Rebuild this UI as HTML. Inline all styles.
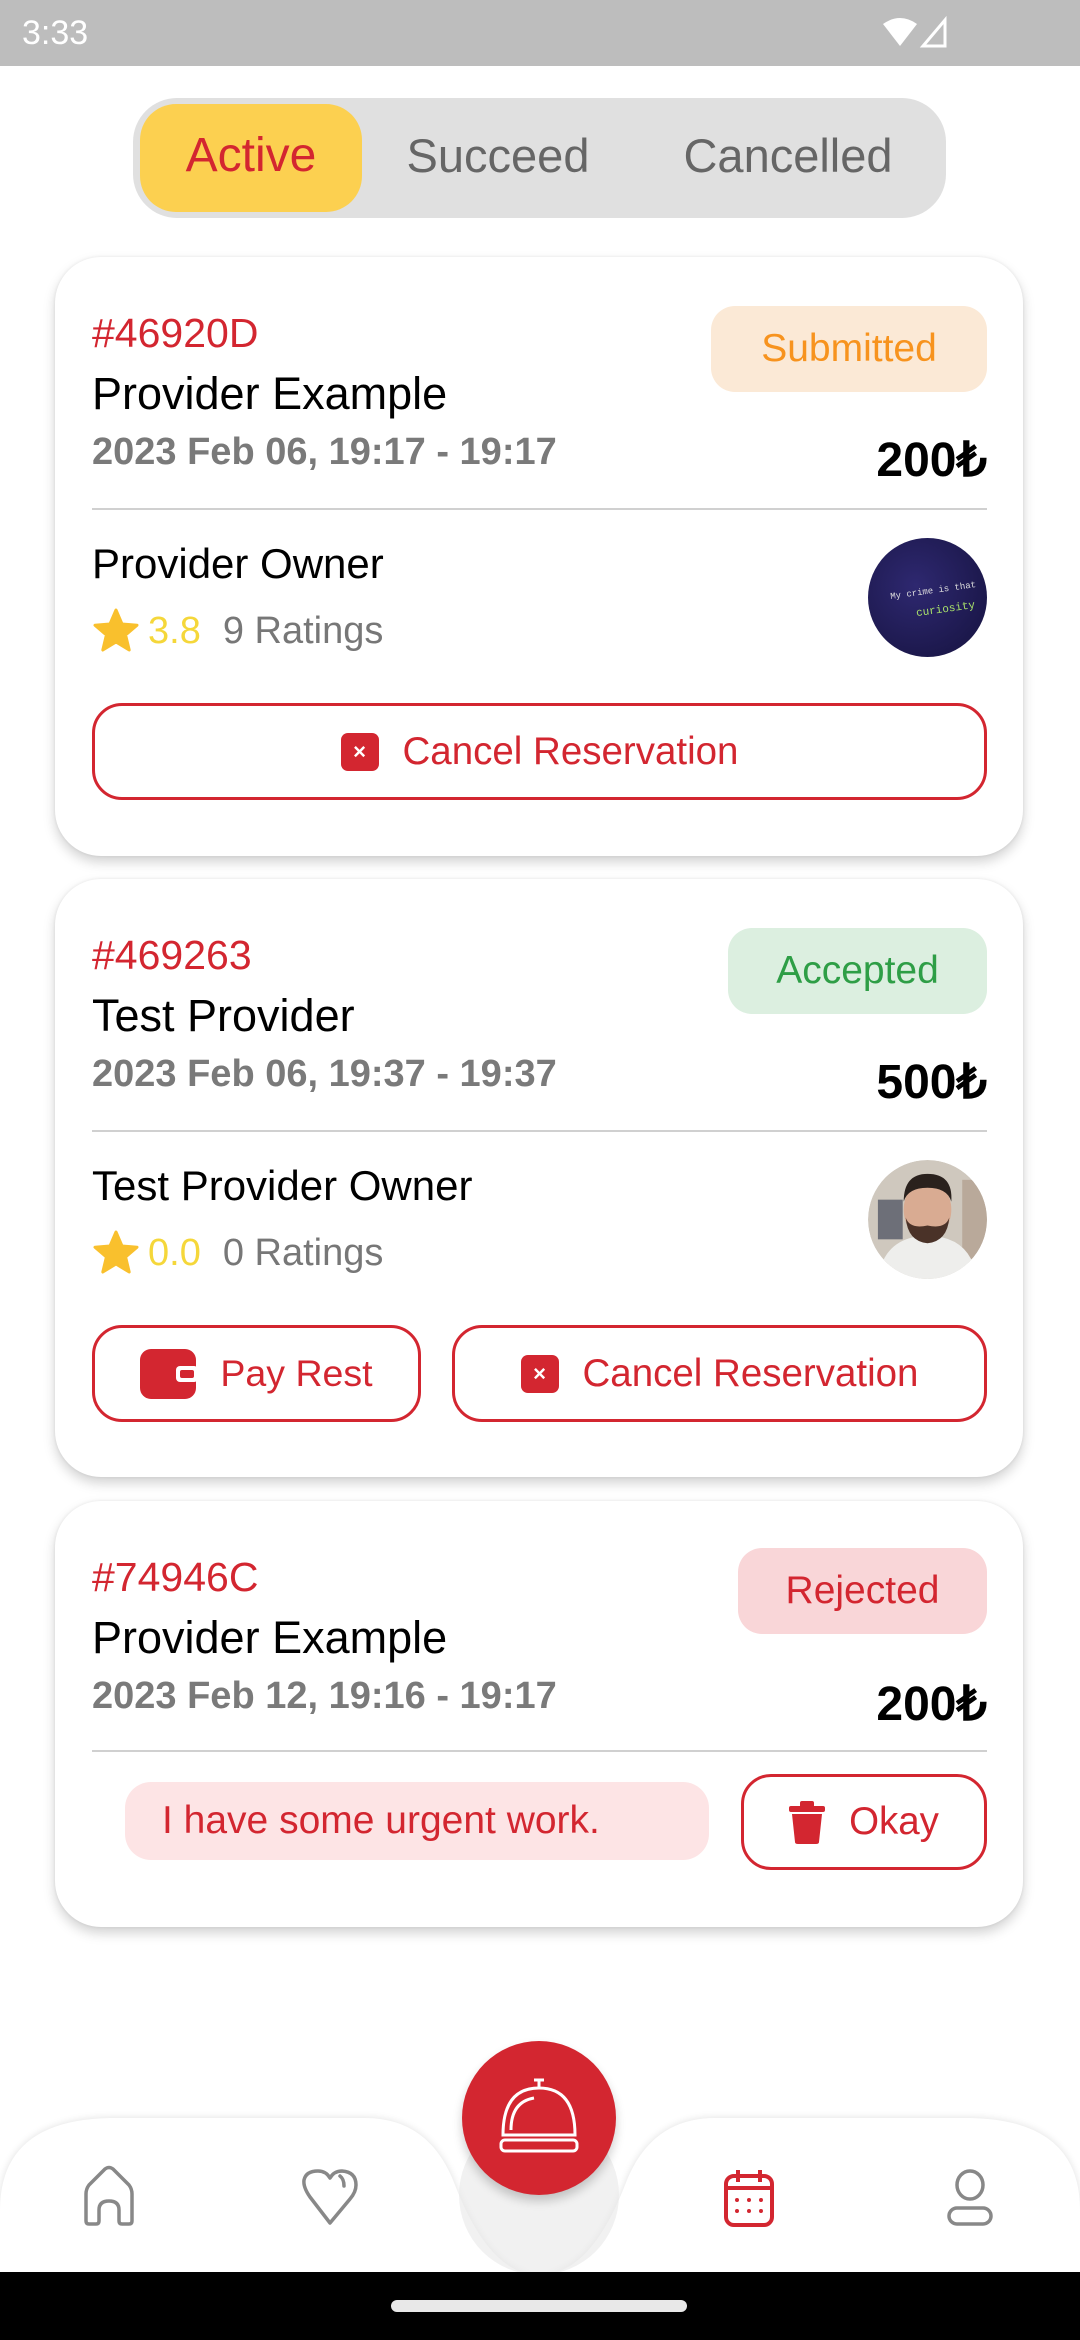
<!DOCTYPE html>
<html><head><meta charset="utf-8"><style>
*{margin:0;padding:0;box-sizing:border-box}
body{width:1080px;height:2340px;background:#fff;position:relative;overflow:hidden;font-family:"Liberation Sans",Arial,sans-serif}
.a{position:absolute;white-space:nowrap}
.t{position:absolute;white-space:nowrap;line-height:56px;height:56px}
.card{position:absolute;left:55px;width:968px;background:#fff;border-radius:46px;box-shadow:0 6px 12px rgba(0,0,0,.18),0 0 3px rgba(0,0,0,.08)}
.id{color:#d32630;font-size:41px;left:37px}
.name{color:#000;font-size:45px;left:37px}
.date{color:#7a7a7a;font-size:38px;font-weight:bold;left:37px}
.price{color:#000;font-size:48px;font-weight:bold;right:36px}
.div{position:absolute;left:37px;right:36px;height:2px;background:#d0d0d0}
.badge{position:absolute;border-radius:24px;font-size:39px;text-align:center;line-height:86px;height:86px}
.btn{position:absolute;border:3px solid #d32630;border-radius:30px;height:97px;color:#d32630;font-size:38.5px;display:flex;align-items:center;justify-content:center;gap:24px}
.ic{width:38px;height:38px;background:#d32630;border-radius:7px;color:#fff;font-size:22px;font-weight:bold;display:flex;align-items:center;justify-content:center}
.av{position:absolute;right:36px;width:119px;height:119px;border-radius:50%}
.rt{position:absolute;left:37px;font-size:38px;line-height:56px;height:56px;display:flex;align-items:center;white-space:nowrap}
</style></head><body>
<div class="a" style="left:0;top:0;width:1080px;height:66px;background:#bdbdbd"></div>
<div class="t" style="left:22px;top:5px;color:#fff;font-size:34px">3:33</div>
<svg class="a" style="left:880px;top:16px" width="80" height="40" viewBox="0 0 80 40"><path d="M3 8 Q20 -4 37 8 L20 30 Z" fill="#fff"/><path d="M65 4 L65 30 L43 30 Z" fill="none" stroke="#fff" stroke-width="3"/></svg>

<div class="a" style="left:133px;top:98px;width:813px;height:120px;background:#e0e0e0;border-radius:44px"></div>
<div class="a" style="left:140px;top:104px;width:222px;height:108px;background:#fcd050;border-radius:36px"></div>
<div class="t" style="left:140px;width:222px;top:128px;text-align:center;color:#d32630;font-size:48px">Active</div>
<div class="t" style="left:380px;width:236px;top:128px;text-align:center;color:#666;font-size:47px">Succeed</div>
<div class="t" style="left:660px;width:256px;top:128px;text-align:center;color:#666;font-size:47px">Cancelled</div>

<!-- card1 -->
<div class="card" style="top:257px;height:599px">
 <div class="t id" style="top:48px">#46920D</div>
 <div class="t name" style="top:109px">Provider Example</div>
 <div class="t date" style="top:167px">2023 Feb 06, 19:17 - 19:17</div>
 <div class="t price" style="top:176px">200₺</div>
 <div class="badge" style="right:36px;top:49px;width:276px;background:#fbe9d6;color:#f7931e">Submitted</div>
 <div class="div" style="top:251px"></div>
 <div class="t name" style="top:279px;font-size:42px">Provider Owner</div>
 <div class="rt" style="top:346px"><svg width="48" height="46" viewBox="0 0 24 23"><path d="M12 1 L15 8 L22.5 8.6 L16.8 13.5 L18.6 21 L12 17 L5.4 21 L7.2 13.5 L1.5 8.6 L9 8 Z" fill="#f9c02d" stroke="#f9c02d" stroke-linejoin="round" stroke-width="1.5"/></svg><span style="color:#f5d73a;margin-left:8px">3.8</span><span style="color:#777;margin-left:22px">9 Ratings</span></div>
 <div class="av" style="top:281px;background:radial-gradient(circle at 40% 40%,#2e2870,#15123e);overflow:hidden"><div class="a" style="left:22px;top:48px;font-size:9px;color:#ddd;font-family:'Liberation Mono',monospace;transform:rotate(-8deg)">My crime is that</div><div class="a" style="left:48px;top:66px;font-size:11px;color:#a8e06a;font-family:'Liberation Mono',monospace;transform:rotate(-8deg)">curiosity</div></div>
 <div class="btn" style="left:37px;right:36px;top:446px"><div class="ic">×</div>Cancel Reservation</div>
</div>

<!-- card2 -->
<div class="card" style="top:879px;height:598px">
 <div class="t id" style="top:48px">#469263</div>
 <div class="t name" style="top:109px">Test Provider</div>
 <div class="t date" style="top:167px">2023 Feb 06, 19:37 - 19:37</div>
 <div class="t price" style="top:176px">500₺</div>
 <div class="badge" style="right:36px;top:49px;width:259px;background:#dcefe0;color:#2e9e46">Accepted</div>
 <div class="div" style="top:251px"></div>
 <div class="t name" style="top:279px;font-size:42px">Test Provider Owner</div>
 <div class="rt" style="top:346px"><svg width="48" height="46" viewBox="0 0 24 23"><path d="M12 1 L15 8 L22.5 8.6 L16.8 13.5 L18.6 21 L12 17 L5.4 21 L7.2 13.5 L1.5 8.6 L9 8 Z" fill="#f9c02d" stroke="#f9c02d" stroke-linejoin="round" stroke-width="1.5"/></svg><span style="color:#f5d73a;margin-left:8px">0.0</span><span style="color:#777;margin-left:22px">0 Ratings</span></div>
 <svg class="av" style="top:281px" viewBox="0 0 120 120"><defs><clipPath id="c"><circle cx="60" cy="60" r="60"/></clipPath></defs><g clip-path="url(#c)"><rect width="120" height="120" fill="#cfc8be"/><rect x="10" y="40" width="25" height="40" fill="#6d6f78"/><rect x="95" y="20" width="25" height="80" fill="#b9a99a"/><path d="M10 120 Q15 85 45 78 L75 78 Q105 85 110 120 Z" fill="#eeeeec"/><ellipse cx="60" cy="50" rx="24" ry="30" fill="#d9ab92"/><path d="M36 42 Q36 14 60 14 Q86 14 84 42 Q80 28 60 28 Q40 28 36 42Z" fill="#2a211d"/><path d="M38 58 Q40 82 60 84 Q80 82 82 58 Q78 70 60 66 Q42 70 38 58Z" fill="#4a3228"/></g></svg>
 <div class="btn" style="left:37px;width:329px;top:446px;font-size:37.5px"><svg width="56" height="50" viewBox="0 0 56 50"><rect x="0" y="0" width="56" height="50" rx="11" fill="#d32630"/><rect x="36" y="17" width="22" height="16" rx="4" fill="#fff"/><rect x="40" y="21" width="14" height="8" rx="2" fill="#d32630"/></svg>Pay Rest</div>
 <div class="btn" style="left:397px;right:36px;top:446px"><div class="ic">×</div>Cancel Reservation</div>
</div>

<!-- card3 -->
<div class="card" style="top:1501px;height:426px">
 <div class="t id" style="top:48px">#74946C</div>
 <div class="t name" style="top:109px">Provider Example</div>
 <div class="t date" style="top:167px">2023 Feb 12, 19:16 - 19:17</div>
 <div class="t price" style="top:176px">200₺</div>
 <div class="badge" style="right:36px;top:47px;width:249px;background:#f9d6d8;color:#d32630">Rejected</div>
 <div class="div" style="top:249px"></div>
 <div class="a" style="left:70px;top:281px;width:584px;height:78px;border-radius:26px;background:#fde4e5;color:#d32630;font-size:39px;line-height:78px;padding-left:37px">I have some urgent work.</div>
 <div class="btn" style="left:686px;right:36px;top:273px;height:96px;gap:24px"><svg width="36" height="44" viewBox="0 0 36 44"><rect x="0" y="6" width="36" height="6" rx="2" fill="#d32630"/><rect x="11" y="1" width="14" height="7" rx="2" fill="#d32630"/><path d="M3 14 H33 L30 42 Q30 44 27 44 H9 Q6 44 6 42 Z" fill="#d32630"/></svg>Okay</div>
</div>

<!-- bottom nav -->
<svg class="a" style="left:0;top:2100px" width="1080" height="173" viewBox="0 0 1080 173">
 <defs><filter id="s" x="-10%" y="-30%" width="120%" height="160%"><feGaussianBlur stdDeviation="4"/></filter></defs>
 <path d="M0 175 L0 110 Q0 20 110 18 L365 18 Q430 18 455 85 Q490 175 539 175 Q590 175 625 85 Q650 18 715 18 L970 18 Q1080 20 1080 110 L1080 175 Z" fill="#000" opacity=".12" filter="url(#s)"/>
 <path d="M0 175 L0 110 Q0 20 110 18 L365 18 Q430 18 455 85 Q490 175 539 175 Q590 175 625 85 Q650 18 715 18 L970 18 Q1080 20 1080 110 L1080 175 Z" fill="#fff"/>
 <circle cx="539" cy="95" r="80" fill="#e8e8e8" opacity=".6"/>
 <g fill="none" stroke="#888" stroke-width="3.5" stroke-linejoin="round" stroke-linecap="round">
  <path d="M86 121 L86 94 Q86 89 89 85 L105 69 Q109 66 113 69 L129 85 Q132 89 132 94 L132 121 Q132 124 129 124 L122 124 Q119 124 119 121 L119 110 Q119 101 109 101 Q99 101 99 110 L99 121 Q99 124 96 124 L89 124 Q86 124 86 121Z"/>
  <path d="M330 123 L310 97 Q303 87 304 80 Q306 71 318 71 Q326 71 330 78 Q334 71 342 71 Q356 72 356 85 Q356 92 350 99 Z"/>
  <path d="M340 76 Q344 79 344 86"/>
  <ellipse cx="970" cy="85" rx="13" ry="14"/>
  <rect x="949" y="108" width="42" height="16" rx="8"/>
 </g>
 <g fill="none" stroke="#d32630" stroke-width="4" stroke-linejoin="round">
  <rect x="726" y="76" width="46" height="49" rx="8"/>
  <path d="M726 88 H772 M738 70 V82 M760 70 V82"/>
 </g>
 <g fill="#d32630"><circle cx="737" cy="100" r="2"/><circle cx="749" cy="100" r="2"/><circle cx="761" cy="100" r="2"/><circle cx="737" cy="111" r="2"/><circle cx="749" cy="111" r="2"/><circle cx="761" cy="111" r="2"/></g>
</svg>
<div class="a" style="left:462px;top:2041px;width:154px;height:154px;border-radius:50%;background:#d32630;box-shadow:0 6px 10px rgba(0,0,0,.2)"></div>
<svg class="a" style="left:489px;top:2070px" width="100" height="100" viewBox="0 0 100 100" fill="none" stroke="#fff" stroke-width="3">
 <path d="M45 10 H55 M50 10 V18"/>
 <path d="M14 65 Q14 18 50 18 Q86 18 86 65 Z"/>
 <path d="M22 60 Q22 32 45 28"/>
 <rect x="12" y="70" width="76" height="11" rx="4"/>
</svg>
<div class="a" style="left:0;top:2272px;width:1080px;height:68px;background:#000"></div>
<div class="a" style="left:391px;top:2300px;width:296px;height:12px;border-radius:6px;background:#e8e8e8"></div>
</body></html>
